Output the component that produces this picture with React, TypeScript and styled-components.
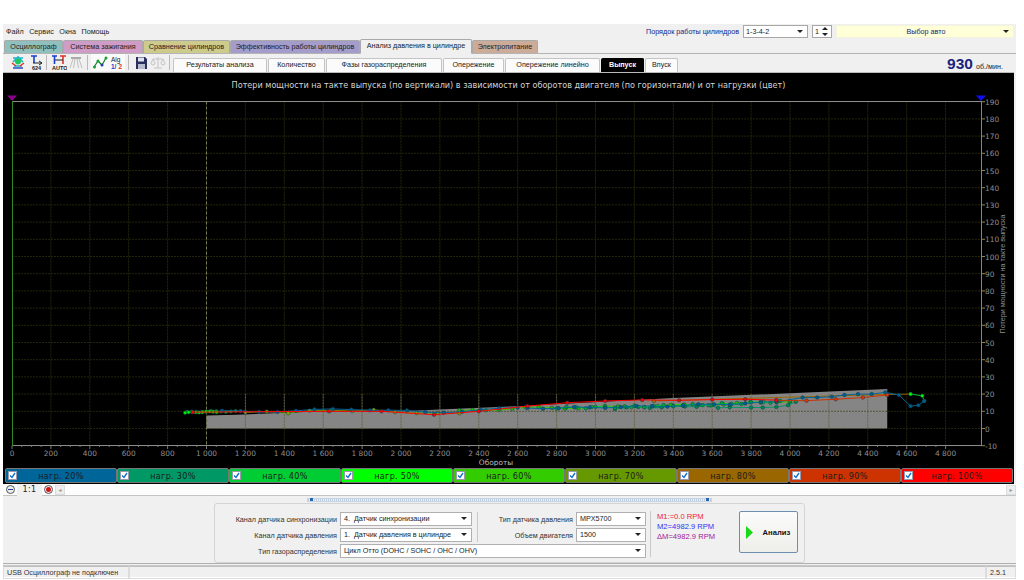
import React from 'react';
import styled, { createGlobalStyle } from 'styled-components';

const UI = '"Liberation Sans", "DejaVu Sans", sans-serif';

const Global = createGlobalStyle`
  html, body { margin: 0; padding: 0; background: #fff; overflow: hidden; }
  body { font-family: ${UI}; }
  * { box-sizing: border-box; }
`;

const Page = styled.div`
  width: 1024px; height: 580px; background: #fff; padding: 24px 8px 3px 3px;
`;
const Win = styled.div`
  width: 1013px; height: 553px; background: #f0f0f0; display: flex; flex-direction: column;
`;
const TopBar = styled.div`
  height: 15px; display: flex; align-items: center; padding: 0 2px 0 3px; flex: none;
`;
const MenuItem = styled.span`
  font: 7.2px ${UI}; color: #222; margin-right: 5.5px;
`;
const Spacer = styled.div`flex: 1;`;
const OrderLabel = styled.span`
  font: 7.2px ${UI}; color: #1a237e; margin-right: 4px;
`;
const TopSelect = styled.div<{ $w: number; $bg?: string; $center?: boolean }>`
  width: ${p => p.$w}px; height: 13px; background: ${p => p.$bg || '#fff'};
  border: 1px solid ${p => p.$bg ? '#f4f4dc' : '#a8a8a8'}; margin-right: 4px; position: relative;
  font: 7.2px ${UI}; line-height: 11px; padding-left: 2px;
  color: ${p => p.$bg ? '#1a237e' : '#222'}; text-align: ${p => p.$center ? 'center' : 'left'};
  &:last-child { margin-right: 0; }
`;
const Arrow = styled.i`
  position: absolute; right: 4px; top: 4px; width: 0; height: 0;
  border-left: 3px solid transparent; border-right: 3px solid transparent; border-top: 3px solid #222;
`;
const Spin = styled.span`
  position: absolute; right: 3px; top: 1px; width: 6px; height: 9px; display: flex; flex-direction: column; justify-content: space-between; align-items: center;
`;
const SpinUp = styled.i`
  width: 0; height: 0; border-left: 3px solid transparent; border-right: 3px solid transparent; border-bottom: 3px solid #222;
`;
const SpinDown = styled.i`
  width: 0; height: 0; border-left: 3px solid transparent; border-right: 3px solid transparent; border-top: 3px solid #222;
`;
const Tabs = styled.div`
  height: 15px; display: flex; align-items: flex-end; padding-left: 1px; flex: none; border-bottom: 1px solid #b4b4b4;
`;
const Tab = styled.div<{ $w: number; $c: string; $active?: boolean }>`
  width: ${p => p.$w}px; height: ${p => p.$active ? 15 : 13}px; background: ${p => p.$c};
  border: 1px solid #a9a9a9; border-bottom: ${p => p.$active ? '1px solid #f0f0f0' : 'none'};
  border-radius: 2px 2px 0 0; margin-bottom: ${p => p.$active ? -1 : 0}px;
  font: 7.2px/12px ${UI}; color: #222; text-align: center; white-space: nowrap;
`;
const Toolbar = styled.div`
  height: 18px; display: flex; align-items: flex-end; padding-left: 6px; flex: none; position: relative;
`;
const Tool = styled.div<{ $on?: boolean }>`
  width: 17px; height: 17px; display: flex; align-items: center; justify-content: center;
  background: ${p => p.$on ? '#fafafa' : 'transparent'};
  margin-bottom: 1px;
`;
const ToolSep = styled.div`
  width: 1px; height: 15px; background: #b9b9b9; margin: 0 3px 2px 3px;
`;
const SubTab = styled.div<{ $w: number; $on?: boolean }>`
  width: ${p => p.$w}px; height: 14px; background: ${p => p.$on ? '#000' : '#fbfbfb'};
  border: 1px solid ${p => p.$on ? '#000' : '#c4c4c4'}; border-bottom: none; border-radius: 2px 2px 0 0;
  font: ${p => p.$on ? 'bold ' : ''}7.2px/12px ${UI}; color: ${p => p.$on ? '#fff' : '#222'};
  text-align: center; white-space: nowrap; margin-right: 1px;
`;
const Rpm = styled.div`
  margin-left: auto; margin-right: 13px; display: flex; align-items: baseline; height: 17px; color: #222;
  font: 7.2px ${UI};
`;
const RpmValue = styled.b`
  font: bold 15.5px ${UI}; color: #1a237e; margin-right: 3px;
`;
const Panel = styled.div`
  height: 412px; width: 1011px; background: #000; flex: none; display: flex; flex-direction: column; border-top: 1px solid #bbb;
`;
const Title = styled.div`
  height: 21px; padding-top: 6px; color: #d4d4d4; text-align: center; font: 8.1px/12px "DejaVu Sans", sans-serif; white-space: nowrap;
`;
const Plot = styled.svg`
  display: block; width: 1011px; height: 372px; flex: none;
  text { font-family: "DejaVu Sans", sans-serif; font-size: 7.4px; fill: #8e8e8e; }
`;
const Loads = styled.div`
  display: flex; padding: 2px 0 0 2px; height: 18px;
`;
const Load = styled.div<{ $c: string }>`
  width: 112px; height: 15px; background: ${p => p.$c}; border: 1px solid #777; border-radius: 2px;
  display: flex; align-items: center; position: relative;
  font: 8.1px "DejaVu Sans", sans-serif; color: #1c1c1c; justify-content: center; letter-spacing: .3px;
`;
const Check = styled.span`
  position: absolute; left: 2px; top: 2px; width: 9px; height: 9px; background: #fff; border: 1px solid #99a; display: flex;
  svg { display: block; }
`;
const ZoomBar = styled.div`
  height: 12px; background: #fdfdfd; border-bottom: 1px solid #c4c4c4; display: flex; align-items: center; padding-left: 3px; flex: none;
`;
const ZoomBtn = styled.div`
  width: 9px; height: 9px; border-radius: 50%; border: 1px solid #555; background: #eee; position: relative; display: flex; align-items: center; justify-content: center;
`;
const ZoomMark = styled.i<{ $c: string; $plus?: boolean }>`
  display: block; width: 5px; height: ${p => p.$plus ? '5px' : '1px'}; border-radius: ${p => p.$plus ? '50%' : '0'}; background: ${p => p.$c};
`;
const Ratio = styled.div`
  width: 25px; height: 12px; margin: 0 2px; background: #f0f0f0; text-align: center; color: #222;
  font: 8px/12px "DejaVu Sans", sans-serif; letter-spacing: .3px;
`;
const ScrollLeft = styled.div`
  width: 10px; height: 10px; background: #eee; border: 1px solid #ddd; margin-left: 2px; color: #999; font: 6px/8px "DejaVu Sans"; text-align: center;
`;
const ScrollRight = styled(ScrollLeft)`
  margin-left: auto;
`;
const Splitter = styled.div`
  height: 7px; flex: none; display: flex; justify-content: center; align-items: flex-start; padding-top: 2px;
`;
const Grip = styled.div`
  width: 405px; height: 4px; background: repeating-linear-gradient(90deg, #b9cbe0 0 1px, #eef3f8 1px 2px); position: relative; border: 1px solid #c8d4e2;
`;
const GripMark = styled.i<{ $right?: boolean }>`
  position: absolute; top: -1px; ${p => p.$right ? 'right: 2px;' : 'left: 2px;'} width: 3px; height: 3px; background: #2a62ad;
`;
const Form = styled.div`
  width: 591px; height: 60px; margin: 0 auto; flex: none; background: #f0f0f0; border: 1px solid #d4d4d4; border-radius: 3px;
  display: flex; padding: 7px 6px 4px 0;
`;
const Fields = styled.div`
  display: grid; grid-template-columns: 125px 132px 9px 95px 70px; grid-template-rows: 16px 16px 16px; align-items: center;
`;
const Label = styled.div<{ $col?: number }>`
  font: 7.2px ${UI}; color: #333; text-align: right; padding-right: 3px; white-space: nowrap;
  ${p => p.$col ? `grid-column: ${p.$col};` : ''}
`;
const Pick = styled.div<{ $span?: boolean }>`
  height: 14px; background: #fff; border: 1px solid #b0b0b0; position: relative; padding-left: 3px;
  font: 7.2px/12px ${UI}; color: #222; white-space: pre;
  ${p => p.$span ? 'grid-column: 2 / 6;' : ''}
`;
const VLine = styled.div`
  grid-row: 1 / 3; grid-column: 3; width: 1px; height: 30px; background: #c8c8c8; margin-left: 5px;
`;
const Readout = styled.div`
  width: 86px; margin-left: 4px; padding: 1px 0 0 6px; border-left: 1px solid #c8c8c8; height: 46px;
  font: 7.6px/10px ${UI}; white-space: nowrap;
`;
const Line = styled.div<{ $c: string }>`color: ${p => p.$c};`;
const Go = styled.div`
  width: 61px; height: 42px; margin-left: 5px; border: 1px solid #6c8fb0; border-radius: 2px;
  background: linear-gradient(#fbfbfb, #eeeeea); display: flex; align-items: center; padding-left: 6px; gap: 10px;
  font: bold 7.6px ${UI}; color: #111; position: relative;
`;
const Rule = styled.div`
  height: 3px; flex: none; border-top: 1px solid #b0b0b0; border-bottom: 1px solid #c8c8c8;
`;
const Status = styled.div`
  flex: 1; display: flex; align-items: stretch; font: 7.2px/11px ${UI}; color: #333;
`;
const StatusCell = styled.div<{ $w?: number }>`
  ${p => p.$w ? `width: ${p.$w}px; flex: none;` : 'flex: 1;'} border: 1px solid #dcdcdc; border-top-color: #c0c0c0; padding-left: 3px; white-space: nowrap;
`;

// chart helpers, page coordinates
const X = (r: number) => 12 + r * 0.1945;
const Y = (v: number) => 428.5 - v * 1.72;
const BASE: [number, number][] = [[880, 9], [1000, 9.5], [1400, 9.6], [1700, 11], [2000, 10], [2170, 8.5], [2400, 10.5], [2600, 11.5], [3000, 12], [3400, 13], [3800, 14.5], [4050, 16]];
const base = (r: number) => {
  for (let i = 1; i < BASE.length; i++) {
    if (r <= BASE[i][0]) {
      const [a, b] = BASE[i - 1], [c, d] = BASE[i];
      return b + (d - b) * (r - a) / (c - a);
    }
  }
  return 16;
};
type P = [number, number];
type S = { c: string; o: string; pts: P[] };
const gen = (from: number, to: number, step: number, off: number, amp: number, k: number) => {
  const a: P[] = [];
  for (let r = from; r <= to; r += step) a.push([r, base(r) + off + Math.sin(r * k) * amp]);
  return a;
};
const SERIES: S[] = [
  { c: '#996600', o: '#aa7700', pts: [[3300, 16], [4500, 19.8], [4620, 20]] },
  { c: '#669900', o: '#88aa00', pts: gen(1200, 2300, 110, -0.2, 0.6, 0.021) },
  { c: '#33cc00', o: '#22bb00', pts: gen(2300, 4050, 68, 0.3, 0.6, 0.017) },
  { c: '#009966', o: '#008855', pts: [...gen(3100, 3600, 60, -0.4, 0.5, 0.03), [3630, 12], [3690, 12.3], [3800, 12.2], [3860, 12.2], [3930, 12.5], [3990, 13.5], [4030, 15.5]] },
  { c: '#00cc33', o: '#00aa33', pts: gen(2800, 4030, 50, 0.3, 0.5, 0.04) },
  { c: '#00cc33', o: '#00aa33', pts: gen(900, 1150, 25, 0.4, 0.3, 0.05) },
  { c: '#00ff00', o: '#00ee00', pts: gen(890, 1060, 18, 0.2, 0.2, 0.07) },
  { c: '#00cc33', o: '#00ff00', pts: [[4620, 20], [4680, 19], [4690, 16]] },
  { c: '#006699', o: '#005f90', pts: gen(1080, 2650, 95, 0.4, 0.4, 0.013) },
  { c: '#006699', o: '#005f90', pts: [...gen(2650, 4000, 80, 0.2, 0.4, 0.02), [4065, 18], [4140, 18], [4215, 18.5], [4280, 19.5], [4350, 20], [4420, 20], [4490, 21], [4560, 19.5], [4620, 13], [4660, 13.5], [4690, 16]] },
  { c: '#cc3300', o: '#ee3300', pts: [[3930, 16.2], [4085, 16.2], [4235, 17], [4375, 18], [4500, 19.5]] },
  { c: '#ff0000', o: '#ff0000', pts: [[930, 9.5], [1630, 10], [1900, 10], [2170, 8], [2400, 10], [2650, 13], [2855, 15], [3050, 16], [3240, 16.6], [3430, 16.4], [3600, 16.8], [3770, 17], [3930, 16.5]] },
];
const AREA = `${X(1000)},${Y(0)} ${X(1000)},${Y(7.5)} ${X(1150)},${Y(8)} ${X(1600)},${Y(10)} ${X(2000)},${Y(10)} ${X(2200)},${Y(11)} ${X(2600)},${Y(13)} ${X(3400)},${Y(17.7)} ${X(4000)},${Y(20.5)} ${X(4500)},${Y(23)} ${X(4500)},${Y(0)}`;

function Chart() {
  const xs = Array.from({ length: 25 }, (_, i) => i * 200);
  const ys = Array.from({ length: 21 }, (_, i) => i * 10 - 10);
  const fmt = (n: number) => n >= 1000 ? `${Math.floor(n / 1000)} ${String(n % 1000).padStart(3, '0')}` : String(n);
  return (
    <Plot viewBox="3 94 1011 372">
      {xs.map(v => v > 0 && <line key={v} x1={X(v)} x2={X(v)} y1={101.5} y2={445.5} stroke="#26260c" strokeWidth={1} strokeDasharray="2 1" />)}
      {ys.map(v => <line key={v} x1={12} x2={981} y1={Y(v)} y2={Y(v)} stroke="#24240c" strokeWidth={1} strokeDasharray="2 1" />)}
      <polygon points={AREA} fill="#858585" />
      {ys.filter(v => v === 0 || v === 10).map(v => <line key={v} x1={207} x2={X(4500)} y1={Y(v)} y2={Y(v)} stroke="#55553a" strokeDasharray="2 1" />)}
      {xs.filter(v => v > 1000 && v <= 4400).map(v => <line key={v} x1={X(v)} x2={X(v)} y1={Y(0)} y2={Y(20)} stroke="#66664a" strokeDasharray="2 1" />)}
      <line x1={X(1000)} x2={X(1000)} y1={101.5} y2={445.5} stroke="#77775a" strokeDasharray="3 2" />
      <line x1={12} x2={981} y1={101.5} y2={101.5} stroke="#8c8c8c" />
      <line x1={12} x2={981} y1={445.5} y2={445.5} stroke="#8c8c8c" />
      <line x1={12.5} x2={12.5} y1={101} y2={446} stroke="#2c8a1e" />
      <line x1={981.5} x2={981.5} y1={101} y2={446} stroke="#8f8a45" />
      {Array.from({ length: 97 }, (_, i) => <line key={i} x1={X(i * 50)} x2={X(i * 50)} y1={445.5} y2={i % 4 === 0 ? 449 : 447} stroke="#777" />)}
      {ys.map(v => <line key={v} x1={981} x2={985} y1={Y(v)} y2={Y(v)} stroke="#8f8a45" />)}
      {xs.map(v => <text key={v} x={X(v)} y={456} textAnchor="middle">{fmt(v)}</text>)}
      {ys.map(v => <text key={v} x={985} y={Y(v) + 3}>{v}</text>)}
      <text x={496} y={465} textAnchor="middle" style={{ fill: '#bdbdbd' }}>Обороты</text>
      <text transform="translate(1005 274) rotate(-90)" textAnchor="middle" style={{ fontFamily: UI, fontSize: 7.2 }}>Потери мощности на такте выпуска</text>
      <polygon points="7,95.5 17,95.5 12,101" fill="#8b008b" />
      <polygon points="976,95.5 986,95.5 981,101" fill="#1010ee" />
      {SERIES.map((s, i) => (
        <g key={i}>
          <polyline points={s.pts.map(([a, b]) => `${X(a)},${Y(b)}`).join(' ')} fill="none" stroke={s.c} strokeWidth={1} />
          {s.pts.map(([a, b], j) => <circle key={j} cx={X(a)} cy={Y(b)} r={1.8} fill={s.o} stroke="#063a4a" strokeWidth={0.5} />)}
        </g>
      ))}
    </Plot>
  );
}

const TABS: [string, number, string, boolean?][] = [
  ['Осциллограф', 59, '#8fc0bd'], ['Система зажигания', 80, '#cf9cc8'], ['Сравнение цилиндров', 87, '#cdcb8b'],
  ['Эффективность работы цилиндров', 130, '#a49ccb'], ['Анализ давления в цилиндре', 112, '#f0f0f0', true], ['Электропитание', 66, '#ccab98'],
];
const SUBS: [string, number, boolean?][] = [
  ['Результаты анализа', 94], ['Количество', 57], ['Фазы газораспределения', 116], ['Опережение', 61],
  ['Опережение линейно', 95], ['Выпуск', 43, true], ['Впуск', 33],
];
const LOADS: [number, string][] = [[20, '#006699'], [30, '#009966'], [40, '#00cc33'], [50, '#00ff00'], [60, '#33cc00'], [70, '#669900'], [80, '#996600'], [90, '#cc3300'], [100, '#ff0000']];

const I = (p: { children: React.ReactNode }) => <svg width="16" height="15" viewBox="0 0 16 15">{p.children}</svg>;

export default function App() {
  return (
    <Page>
      <Global />
      <Win>
        <TopBar>
          {['Файл', 'Сервис', 'Окна', 'Помощь'].map(m => <MenuItem key={m}>{m}</MenuItem>)}
          <Spacer />
          <OrderLabel>Порядок работы цилиндров</OrderLabel>
          <TopSelect $w={65}>1-3-4-2<Arrow /></TopSelect>
          <TopSelect $w={20}>1<Spin><SpinUp /><SpinDown /></Spin></TopSelect>
          <TopSelect $w={178} $bg="#ffffd8" $center>Выбор авто<Arrow /></TopSelect>
        </TopBar>
        <Tabs>
          {TABS.map(([t, w, c, a]) => <Tab key={t} $w={w} $c={c} $active={a}>{t}</Tab>)}
        </Tabs>
        <Toolbar>
          <Tool><I><path d="M3 3h10M3 7l5-5 5 5M4 11h8" stroke="#19b5c9" strokeWidth="1.6" fill="none" /><circle cx="8" cy="6.5" r="3" fill="#22c55e" /><path d="M2 8l4 3M14 8l-4 3" stroke="#e0342c" strokeWidth="1.4" /><path d="M3 13h10" stroke="#1f3fc0" strokeWidth="1.4" /></I></Tool>
          <Tool><I><path d="M4 1h6M7 1v7" stroke="#1a3fd0" strokeWidth="1.6" /><path d="M6 8h9M12 6l3 2-3 2" stroke="#222" fill="none" /><text x="5" y="14.5" fontSize="5.5" fontWeight="700" fontFamily="Liberation Sans" fill="#222">624</text></I></Tool>
          <ToolSep />
          <Tool><I><path d="M1 1h5M3.5 1v8" stroke="#1a3fd0" strokeWidth="1.6" /><path d="M9 1h6M12 1v8" stroke="#e0342c" strokeWidth="1.6" /><path d="M4 5h8" stroke="#222" /><text x="1" y="14.5" fontSize="5.5" fontWeight="700" fontFamily="Liberation Sans" fill="#222">AUTO</text></I></Tool>
          <Tool><I><path d="M3 2h10v2H3z" fill="#aaa" /><path d="M5 4L2 13M7 4L5.5 13M9 4l1.5 9M11 4l3 9" stroke="#c0c0c0" fill="none" /></I></Tool>
          <ToolSep />
          <Tool $on><I><path d="M2 12l4-6 4 4 4-7" stroke="#1c7a2e" strokeWidth="1.2" fill="none" /><circle cx="2.5" cy="12" r="1.5" fill="#12a02e" /><circle cx="6" cy="6" r="1.5" fill="#12a02e" /><circle cx="10" cy="10" r="1.5" fill="#1c3fae" /><circle cx="14" cy="3" r="1.5" fill="#12a02e" /></I></Tool>
          <Tool $on><I><text x="2" y="6.5" fontSize="6.5" fontFamily="Liberation Sans" fill="#222">Alg</text><text x="2" y="14" fontSize="6.5" fontWeight="700" fontFamily="Liberation Sans" fill="#1a3fd0">1/</text><text x="9.5" y="14" fontSize="6.5" fontWeight="700" fontFamily="Liberation Sans" fill="#e0342c">2</text></I></Tool>
          <ToolSep />
          <Tool><I><path d="M3 2h9l2 2v10H3z" fill="#27305f" /><rect x="5" y="2.5" width="6" height="4" fill="#dfe3ee" /><rect x="5" y="9" width="7" height="5" fill="#b6bccd" /></I></Tool>
          <Tool><I><path d="M8 2v11M4 13h8M3 4h10" stroke="#c4c4c4" fill="none" /><path d="M1 8l2-4 2 4a2 2 0 01-4 0zM11 8l2-4 2 4a2 2 0 01-4 0z" stroke="#c4c4c4" fill="#eee" /></I></Tool>
          <ToolSep />
          {SUBS.map(([t, w, on]) => <SubTab key={t} $w={w} $on={on}>{t}</SubTab>)}
          <Rpm><RpmValue>930</RpmValue>об./мин.</Rpm>
        </Toolbar>
        <Panel>
          <Title>Потери мощности на такте выпуска (по вертикали) в зависимости от оборотов двигателя (по горизонтали) и от нагрузки (цвет)</Title>
          <Chart />
          <Loads>
            {LOADS.map(([n, c]) => (
              <Load key={n} $c={c}>
                <Check><svg width="7" height="7" viewBox="0 0 7 7"><path d="M1 3.5l2 2 3-4.5" stroke="#1a6fd0" strokeWidth="1.4" fill="none" /></svg></Check>
                нагр. {n}%
              </Load>
            ))}
          </Loads>
        </Panel>
        <ZoomBar>
          <ZoomBtn><ZoomMark $c="#1a3f9a" /></ZoomBtn>
          <Ratio>1:1</Ratio>
          <ZoomBtn><ZoomMark $c="#d01818" $plus /></ZoomBtn>
          <ScrollLeft>◂</ScrollLeft>
          <ScrollRight>▸</ScrollRight>
        </ZoomBar>
        <Splitter><Grip><GripMark /><GripMark $right /></Grip></Splitter>
        <Form>
          <Fields>
            <Label>Канал датчика синхронизации</Label>
            <Pick>{'4.  Датчик синхронизации'}<Arrow /></Pick>
            <VLine />
            <Label>Тип датчика давления</Label>
            <Pick>MPX5700<Arrow /></Pick>
            <Label>Канал датчика давления</Label>
            <Pick>{'1.  Датчик давления в цилиндре'}<Arrow /></Pick>
            <Label $col={4}>Объем двигателя</Label>
            <Pick>1500<Arrow /></Pick>
            <Label>Тип газораспределения</Label>
            <Pick $span>Цикл Отто (DOHC / SOHC / OHC / OHV)<Arrow /></Pick>
          </Fields>
          <Readout>
            <Line $c="#f02030">M1:=0.0 RPM</Line>
            <Line $c="#3030f0">M2=4982.9 RPM</Line>
            <Line $c="#a020a0">ΔM=4982.9 RPM</Line>
          </Readout>
          <Go>
            <svg width="7" height="13" viewBox="0 0 7 13"><polygon points="0,0 7,6.5 0,13" fill="#18d818" /></svg>
            Анализ
          </Go>
        </Form>
        <Rule />
        <Status>
          <StatusCell $w={126}>USB Осциллограф не подключен</StatusCell>
          <StatusCell />
          <StatusCell $w={30}>2.5.1</StatusCell>
        </Status>
      </Win>
    </Page>
  );
}
